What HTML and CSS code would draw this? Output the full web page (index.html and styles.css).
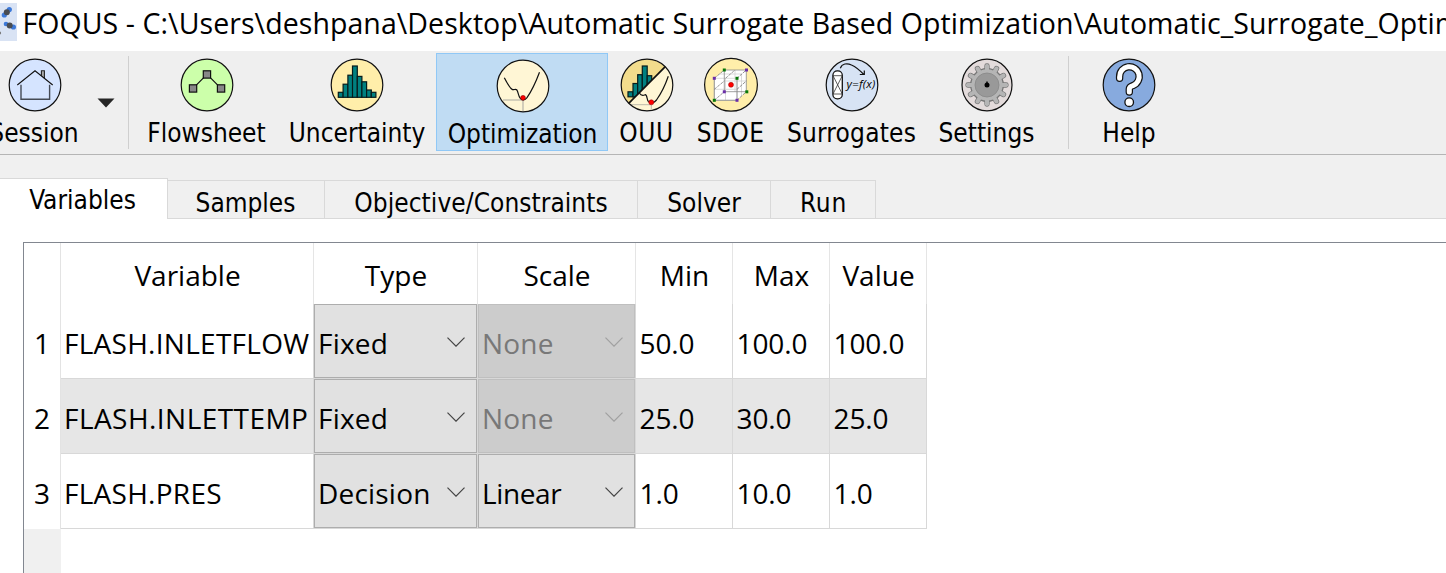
FILE: index.html
```
<!DOCTYPE html>
<html lang="en">
<head>
<meta charset="utf-8">
<title>FOQUS</title>
<link rel="stylesheet" href="styles.css">
</head>
<body>
<header class="titlebar">
  <svg class="app-icon" width="17" height="38" viewBox="0 3 17 38">
    <rect y="3" width="17" height="38" fill="#d9e3f4"/>
    <g fill="#3b78d8"><circle cx="9.3" cy="9.6" r="2.6"/><circle cx="4.3" cy="15" r="2.6"/><circle cx="6" cy="24" r="2.3"/><circle cx="13.4" cy="27" r="2.6"/></g>
    <g fill="#484c52"><circle cx="6.8" cy="12.3" r="3"/><circle cx="9.7" cy="25.4" r="3"/></g>
    <circle cx="-.5" cy="33" r="1.6" fill="#777"/>
  </svg>
  <span class="title-text">FOQUS - C:\Users\deshpana\Desktop\Automatic Surrogate Based Optimization\Automatic_Surrogate_Optimization</span>
</header>

<nav class="toolbar">
  <button class="tool session">
    <svg class="icon" viewBox="0 0 54 54"><circle class="ring" cx="27" cy="27" r="25.8" fill="#d5e4ff"/>
      <path d="M33.4 17.8V12.8h3v7.6" fill="#aaa" stroke="#222" stroke-width="1.1"/>
      <path d="M9.3 27 27 12.8 44.7 27" fill="none" stroke="#111" stroke-width="1.1"/>
      <path d="M13 26.8V41.3H41.6V26.8" fill="none" stroke="#444a55" stroke-width="1.4"/></svg>
    <span>Session</span>
  </button>
  <button class="drop"><svg width="18" height="10" viewBox="0 0 18 10"><path d="M.5 .5h17L9 9.5z" fill="#262626"/></svg></button>
  <i class="sep"></i>
  <button class="tool flowsheet">
    <svg class="icon" viewBox="0 0 54 54"><circle class="ring" cx="27" cy="27" r="25.8" fill="#ccffaa"/>
      <path d="M13 30.3 27 16.3 41 30.3" fill="none" stroke="#111" stroke-width="1.1"/>
      <g fill="#888" stroke="#111" stroke-width="1.2"><rect x="23.3" y="12.8" width="7.3" height="7.3"/><rect x="9.4" y="26.8" width="7.3" height="7.3"/><rect x="37.4" y="26.8" width="7.3" height="7.3"/></g></svg>
    <span>Flowsheet</span>
  </button>
  <button class="tool uncertainty">
    <svg class="icon" viewBox="0 0 54 54"><circle class="ring" cx="27" cy="27" r="25.8" fill="#ffeeaa"/>
      <g fill="#008080" stroke="#071c1c" stroke-width="1.2"><rect x="8.3" y="34.3" width="4.8" height="5"/><rect x="13.1" y="26.2" width="4.8" height="13.1"/><rect x="17.9" y="17.2" width="4.8" height="22.1"/><rect x="22.5" y="8" width="4.8" height="31.3"/><rect x="27.3" y="18.4" width="4.6" height="20.9"/><rect x="31.9" y="23.8" width="4.7" height="15.5"/><rect x="36.6" y="32" width="4.7" height="7.3"/><rect x="41.3" y="34.3" width="4.6" height="5"/></g></svg>
    <span>Uncertainty</span>
  </button>
  <button class="tool optimization active">
    <svg class="icon" viewBox="0 0 54 54"><circle class="ring" cx="27" cy="27" r="25.8" fill="#fff6d5"/>
      <path d="M7 41H27V52" fill="none" stroke="#c8c3b3" stroke-width="1.6"/>
      <path d="M8.3 18.7C11 24 13.5 29 16.5 30.6 18.2 31.2 19.6 29.4 20.9 31 22.3 33.5 22.5 37 24 39 26 41.8 29 41.4 31 38.7 36 31.5 41 20 43.5 13.3" fill="none" stroke="#111" stroke-width="1.2"/>
      <circle cx="27" cy="38.8" r="2.4" fill="#f00" stroke="#800" stroke-width=".6"/></svg>
    <span>Optimization</span>
  </button>
  <button class="tool ouu">
    <svg class="icon" viewBox="0 0 54 54">
      <clipPath id="upper"><path d="M0 0H54L0 54z"/></clipPath>
      <circle cx="27" cy="27" r="25.8" fill="#fff6d5"/>
      <g clip-path="url(#upper)"><circle cx="27" cy="27" r="25.8" fill="#f2dc8c"/>
        <g fill="#008080" stroke="#071c1c" stroke-width="1.2"><rect x="8" y="33.8" width="5" height="5"/><rect x="13" y="25.5" width="4.7" height="13.5"/><rect x="17.7" y="16.7" width="4.6" height="22"/><rect x="22.3" y="8" width="4.9" height="30"/><rect x="27.2" y="17.7" width="4.5" height="20"/></g></g>
      <path d="M10 46.7H31.3V51" fill="none" stroke="#bdb9aa" stroke-width="1"/>
      <path d="M8.7 45.3 45.3 8.7" stroke="#111" stroke-width="1.7"/>
      <path d="M19.5 35.3C21.5 38.5 23.5 37.5 25.2 36.7 27.5 36.8 26.5 41.5 28.5 43.6 30.5 45.5 34 45 36.5 42 41.5 35 46 25 48.3 18.3" fill="none" stroke="#111" stroke-width="1.2"/>
      <circle cx="31.3" cy="44.3" r="2.5" fill="#f00" stroke="#800" stroke-width=".5"/>
      <circle class="ring" cx="27" cy="27" r="25.8" fill="none"/></svg>
    <span>OUU</span>
  </button>
  <button class="tool sdoe">
    <svg class="icon" viewBox="0 0 54 54"><circle class="ring" cx="27" cy="26.8" r="26.4" fill="#ffeeaa"/>
      <path d="M10.3 20.3 20.3 12H42.3V33.7L33 42.3H10.3z" fill="#fff"/>
      <path d="M10.3 20.3H33V42.3H10.3zM10.3 31.3H33M21.5 20.3V42.3M15 16H37.5V38M31 12V34M20 23H42.3" fill="none" stroke="#d2d2d2" stroke-width=".8"/>
      <path d="M20.3 12H42.3V33.7H20.3zM10.3 20.3V42.3M33 20.3V42.3H10.3" fill="none" stroke="#888" stroke-width=".8"/>
      <path d="M10.3 20.3 20.3 12M33 20.3 42.3 12M33 42.3 42.3 33.7M10.3 42.3 20.3 33.7M21.5 20.3 31 12M10.3 31.3 20.3 23M33 31.3 42.3 23" stroke="#777" stroke-width=".8" stroke-dasharray="3 1"/>
      <g fill="#087808"><rect x="18.8" y="10.5" width="3" height="3"/><rect x="31.5" y="18.8" width="3" height="3"/><rect x="41.3" y="32.3" width="3" height="3"/><rect x="8.8" y="40.8" width="3" height="3"/></g>
      <g fill="#6b2fa8"><rect x="41" y="10.5" width="3" height="3"/><rect x="8.8" y="18.8" width="3" height="3"/><rect x="18.8" y="32.3" width="3" height="3"/><rect x="31.5" y="40.8" width="3" height="3"/></g>
      <circle cx="27" cy="26.8" r="2.5" fill="#f00" stroke="#900" stroke-width=".5"/></svg>
    <span>SDOE</span>
  </button>
  <button class="tool surrogates">
    <svg class="icon" viewBox="0 0 54 54"><circle class="ring" cx="27" cy="27" r="25.8" fill="#d7e3f4"/>
      <rect x="7.9" y="12.9" width="9.4" height="28" rx="4.4" fill="#fff" stroke="#111" stroke-width="1.3"/>
      <path d="M8 17.7H17.3M8 36H17.3M8 17.7 17.3 36M17.3 17.7 8 36" stroke="#333" stroke-width=".8"/>
      <path d="M15.3 10.3C17 5.5 22 4.8 26.5 7 31 9 35.5 13 38.8 16.5M34.8 16.5H39.3V12.5" fill="none" stroke="#111" stroke-width="1.2"/>
      <text class="formula" x="21.5" y="30.3" textLength="29" lengthAdjust="spacingAndGlyphs">y=f(x)</text></svg>
    <span>Surrogates</span>
  </button>
  <button class="tool settings">
    <svg class="icon" viewBox="0 0 54 54"><ellipse class="ring" cx="27" cy="27" rx="25" ry="25.8" fill="#e3dbdb"/>
      <defs><g id="teeth"><rect id="tooth" x="25" y="6" width="4" height="42" rx="1.8"/><use href="#tooth" transform="rotate(30 27 27)"/><use href="#tooth" transform="rotate(60 27 27)"/><use href="#tooth" transform="rotate(90 27 27)"/><use href="#tooth" transform="rotate(120 27 27)"/><use href="#tooth" transform="rotate(150 27 27)"/></g></defs>
      <g fill="#b5b5b5" stroke="#777" stroke-width="1.3"><use href="#teeth"/><circle cx="27" cy="27" r="16.3"/></g>
      <use href="#teeth" fill="#b5b5b5"/>
      <circle cx="27" cy="27" r="12" fill="#999" stroke="#888" stroke-width=".8"/>
      <circle cx="27" cy="27" r="2.5"/><rect x="26.3" y="23.5" width="1.4" height="3"/></svg>
    <span>Settings</span>
  </button>
  <i class="sep sep-help"></i>
  <button class="tool help">
    <svg class="icon" viewBox="0 0 54 54"><circle class="ring" cx="27" cy="27" r="25.8" fill="#87aade"/>
      <g fill="none" stroke-linecap="round" stroke-linejoin="round"><path d="M17.6 20.3V18.8A9.8 9.8 0 1 1 31 27.6Q27.3 28.8 27.3 31V34" stroke="#111" stroke-width="7.4"/><path d="M17.6 20.3V18.8A9.8 9.8 0 1 1 31 27.6Q27.3 28.8 27.3 31V34" stroke="#fff" stroke-width="5"/></g>
      <circle cx="27.2" cy="44.2" r="4.3" fill="#fff" stroke="#111" stroke-width="1.3"/></svg>
    <span>Help</span>
  </button>
</nav>

<div class="tabs">
  <div class="tab tab-variables selected">Variables</div>
  <div class="tab tab-samples">Samples</div>
  <div class="tab tab-objective">Objective/Constraints</div>
  <div class="tab tab-solver">Solver</div>
  <div class="tab tab-run">Run</div>
  <div class="tab-rest"></div>
</div>

<main class="pane">
  <div class="grid">
    <div class="row head">
      <div class="num"></div><div class="cell">Variable</div><div class="cell">Type</div><div class="cell">Scale</div><div class="cell">Min</div><div class="cell">Max</div><div class="cell">Value</div>
    </div>
    <div class="row">
      <div class="num">1</div><div class="cell name">FLASH.INLETFLOW</div>
      <div class="cell pick"><div class="combo">Fixed<svg class="chev" viewBox="0 0 18 10"><path d="M.5 .7 9 9.2 17.5 .7"/></svg></div></div>
      <div class="cell pick"><div class="combo disabled">None<svg class="chev" viewBox="0 0 18 10"><path d="M.5 .7 9 9.2 17.5 .7"/></svg></div></div>
      <div class="cell">50.0</div><div class="cell">100.0</div><div class="cell">100.0</div>
    </div>
    <div class="row alt">
      <div class="num">2</div><div class="cell name temp">FLASH.INLETTEMP</div>
      <div class="cell pick"><div class="combo">Fixed<svg class="chev" viewBox="0 0 18 10"><path d="M.5 .7 9 9.2 17.5 .7"/></svg></div></div>
      <div class="cell pick"><div class="combo disabled">None<svg class="chev" viewBox="0 0 18 10"><path d="M.5 .7 9 9.2 17.5 .7"/></svg></div></div>
      <div class="cell">25.0</div><div class="cell">30.0</div><div class="cell">25.0</div>
    </div>
    <div class="row">
      <div class="num">3</div><div class="cell name">FLASH.PRES</div>
      <div class="cell pick"><div class="combo">Decision<svg class="chev" viewBox="0 0 18 10"><path d="M.5 .7 9 9.2 17.5 .7"/></svg></div></div>
      <div class="cell pick"><div class="combo linear">Linear<svg class="chev" viewBox="0 0 18 10"><path d="M.5 .7 9 9.2 17.5 .7"/></svg></div></div>
      <div class="cell">1.0</div><div class="cell">10.0</div><div class="cell">1.0</div>
    </div>
    <div class="gutter"></div>
  </div>
</main>
</body>
</html>
```
FILE: styles.css
```
* { box-sizing: border-box; }
body {
  margin: 0;
  height: 573px;
  display: flex;
  flex-direction: column;
  overflow: hidden;
  background: #f0f0f0;
  color: #000;
  font-family: "Open Sans", "Noto Sans", sans-serif;
  font-size: 28px;
}
button { border: 0; background: none; padding: 0; color: inherit; font: inherit; }

.titlebar { flex: none; display: flex; height: 51px; padding-top: 3px; background: #fff; overflow: hidden; }
.app-icon { flex: none; }
.title-text { margin-left: 5.5px; font-size: 28.5px; line-height: 41px; letter-spacing: .075px; white-space: nowrap; }

.toolbar {
  flex: none;
  display: flex;
  height: 104px;
  background: #efefef;
  border-bottom: 1px solid #b5b5b5;
  font-family: "DejaVu Sans Condensed", "DejaVu Sans", sans-serif;
  font-stretch: condensed;
  font-size: 26px;
}
.tool { flex: none; display: flex; flex-direction: column; align-items: center; padding-top: 7px; line-height: 34px; white-space: nowrap; }
.tool span { margin-top: 4px; }
.icon { width: 54px; height: 54px; flex: none; display: block; overflow: visible; }
.ring { stroke: #111; stroke-width: 1.2; }
.formula { font: italic 11px "Open Sans", sans-serif; }
.session { width: 100px; margin-left: -15px; }
.session span { margin-right: 2px; }
.drop { width: 43px; display: flex; padding: 47px 0 0 12px; align-items: flex-start; }
.sep { flex: none; width: 1px; height: 93px; margin-top: 5px; background: #cfcfcf; }
.flowsheet { width: 142px; margin-left: 7px; }
.flowsheet span { margin-right: 1px; }
.uncertainty { width: 158px; }
.optimization { width: 172px; height: 98px; margin-top: 2px; padding: 5px 0 0 1px; }
.active { background: #c0dcf3; border: 1px solid #90c8f6; }
.ouu { width: 77px; letter-spacing: .6px; }
.sdoe { width: 91px; letter-spacing: .4px; }
.surrogates { width: 151px; letter-spacing: .2px; }
.settings { width: 119px; }
.sep-help { margin-left: 22px; }
.help { width: 102px; margin-left: 9px; }

.tabs {
  flex: none;
  display: flex;
  align-items: flex-end;
  height: 64px;
  font-family: "DejaVu Sans Condensed", "DejaVu Sans", sans-serif;
  font-stretch: condensed;
  font-size: 26px;
}
.tab { flex: none; height: 39px; padding-top: 7px; border: 1px solid #d9d9d9; border-left: 0; line-height: 30px; text-align: center; white-space: nowrap; }
.selected { height: 41px; padding-top: 2px; border-bottom: 0; background: #fff; line-height: 39px; }
.tab-variables { width: 168px; padding-right: 2px; }
.tab-samples { width: 157px; padding-right: 1px; }
.tab-objective { width: 313px; letter-spacing: .05px; }
.tab-solver { width: 133px; }
.tab-run { width: 105px; letter-spacing: .7px; padding-left: 1px; }
.tab-rest { flex: 1; border-bottom: 1px solid #d9d9d9; }

.pane { flex: 1; padding: 23px 0 0 23px; background: #fff; }
.grid { height: 331px; display: flex; flex-direction: column; border: 1px solid #828790; border-width: 1px 0 0 1px; }
.row { flex: none; display: grid; grid-template-columns: 37px 253px 164px 158px 97px 97px 97px; height: 75px; line-height: 70px; letter-spacing: -.1px; }
.num { padding: 4px 0 0; border-right: 1px solid #e3e3e3; text-align: center; }
.cell { padding: 4px 0 0 3.5px; border-right: 1px solid #d8d8d8; border-bottom: 1px solid #d8d8d8; white-space: nowrap; }
.name { padding-left: 3px; letter-spacing: .27px; }
.head { height: 61px; line-height: 57px; letter-spacing: 0; }
.head .cell { padding-left: 1px; border-right-color: #e5e5e5; border-bottom: 0; text-align: center; }
.alt .cell { background: #e6e6e6; }
.temp { letter-spacing: .45px; }
.row .pick { padding: 0; }
.combo { display: flex; align-items: flex-start; height: 74px; padding: 3px 11.5px 0 3px; border: 1px solid #adadad; background: #e1e1e1; letter-spacing: .2px; }
.combo.linear { letter-spacing: -.4px; }
.combo.disabled { border-color: #bfbfbf; background: #ccc; color: #787878; }
.chev { width: 18px; height: 10px; margin: 29px 0 0 auto; fill: none; stroke: #444; stroke-width: 1.2; }
.disabled .chev { stroke: #a0a0a0; }
.gutter { flex: 1; width: 37px; background: #f0f0f0; }
```
